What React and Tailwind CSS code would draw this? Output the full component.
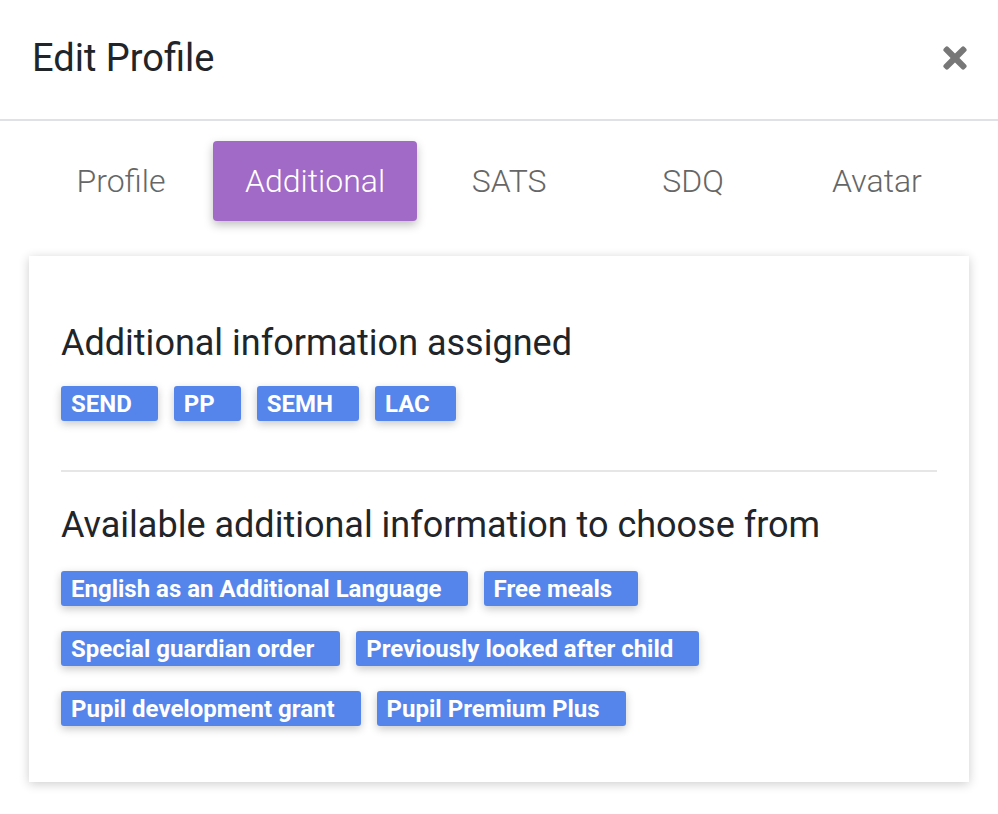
import { FaTimes } from "react-icons/fa";

const tabs = ["Profile", "Additional", "SATS", "SDQ", "Avatar"];
const assigned = ["SEND", "PP", "SEMH", "LAC"];
const available = [
  "English as an Additional Language",
  "Free meals",
  "Special guardian order",
  "Previously looked after child",
  "Pupil development grant",
  "Pupil Premium Plus",
];

function Badge({ label }) {
  return (
    <span className="inline-flex h-[35px] items-center rounded-[3px] bg-[#5585ea] pl-[10px] pr-[26px] text-[24px] font-bold text-white shadow-[0_3px_8px_rgba(0,0,0,0.22)]">
      {label}
    </span>
  );
}

export default function App() {
  return (
    <div className="min-h-[814px] w-full bg-white font-['Roboto',sans-serif] text-[#212529]">
      {/* Header */}
      <div className="flex h-[121px] items-center justify-between border-b-2 border-[#dee2e6] pl-[32px] pr-[26px]">
        <h1 className="pb-1 text-[38px] leading-none">Edit Profile</h1>
        <button className="mb-1 text-[#777]">
          <FaTimes size={34} />
        </button>
      </div>

      {/* Tabs */}
      <div className="mx-[29px] mt-[20px] flex">
        {tabs.map((tab) => (
          <div
            key={tab}
            className={
              tab === "Additional"
                ? "flex h-[80px] flex-1 items-center justify-center rounded bg-[#a06ac6] px-8 text-[32px] font-light text-white shadow-[0_4px_10px_rgba(0,0,0,0.25)]"
                : "flex h-[80px] flex-1 items-center justify-center px-8 text-[32px] font-light text-[#666]"
            }
          >
            {tab}
          </div>
        ))}
      </div>

      {/* Card */}
      <div className="mx-[29px] mt-[35px] bg-white px-[32px] pt-[66px] pb-[56px] shadow-[0_2px_10px_rgba(0,0,0,0.2)]">
        <h2 className="text-[36px] leading-[1.2]">Additional information assigned</h2>
        <div className="mt-[21px] flex flex-wrap gap-x-4 gap-y-[25px]">
          {assigned.map((b) => (
            <Badge key={b} label={b} />
          ))}
        </div>

        <hr className="mt-[49px] border-t-2 border-[#e6e6e6]" />

        <h2 className="mt-[32px] text-[36px] leading-[1.2]">
          Available additional information to choose from
        </h2>
        <div className="mt-[24px] flex flex-col gap-[25px]">
          <div className="flex gap-4">
            <Badge label={available[0]} />
            <Badge label={available[1]} />
          </div>
          <div className="flex gap-4">
            <Badge label={available[2]} />
            <Badge label={available[3]} />
          </div>
          <div className="flex gap-4">
            <Badge label={available[4]} />
            <Badge label={available[5]} />
          </div>
        </div>
      </div>
    </div>
  );
}
